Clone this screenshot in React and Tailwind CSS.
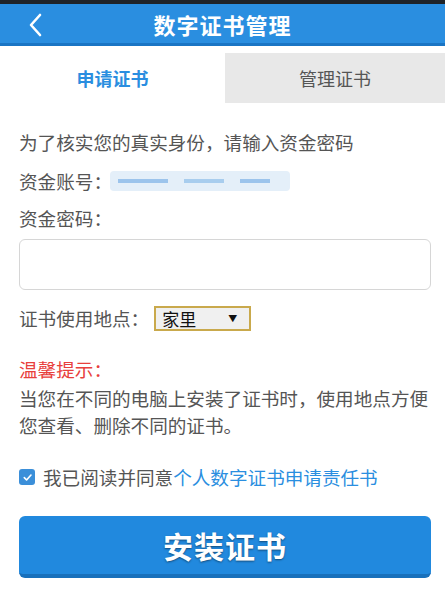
import { useState } from 'react'

const FONT = { fontFamily: '"Noto Sans CJK SC", "Noto Sans", sans-serif' }

function App() {
  const [agreed, setAgreed] = useState(true)
  const [tab, setTab] = useState(0)

  return (
    <div className="w-[445px] h-[597px] bg-white overflow-hidden text-[#555]" style={FONT}>
      {/* Header */}
      <div className="h-[4px] bg-[#1f2328]" />
      <div className="h-[42px] bg-[#2a8ee0] border-b-[3px] border-[#1a75c4] flex items-center relative">
        <svg className="absolute left-[26px] top-[8px]" width="18" height="26" viewBox="0 0 18 26">
          <path d="M14 3 L5 13 L14 23" fill="none" stroke="#fff" strokeWidth="2.6" strokeLinecap="round" strokeLinejoin="round" />
        </svg>
        <div className="flex-1 text-center text-white font-bold text-[22px] leading-none tracking-[1px]">数字证书管理</div>
      </div>

      {/* Tabs */}
      <div className="flex mt-[7px] h-[50px]">
        <button
          onClick={() => setTab(0)}
          className={`w-[225px] text-[18px] ${tab === 0 ? 'bg-white text-[#2a8ee0] font-bold' : 'bg-[#e8e8e8] text-[#555]'}`}
        >
          申请证书
        </button>
        <button
          onClick={() => setTab(1)}
          className={`flex-1 text-[18px] ${tab === 1 ? 'bg-white text-[#2a8ee0] font-bold' : 'bg-[#e8e8e8] text-[#555]'}`}
        >
          管理证书
        </button>
      </div>

      {/* Form */}
      <div className="pl-[19px] pr-[12px] pt-[27px] text-[18.6px]">
        <p className="leading-[24px]">为了核实您的真实身份，请输入资金密码</p>
        <div className="flex items-center mt-[15px] leading-[24px]">
          <span>资金账号：</span>
          <div className="ml-[-2px] h-[20px] w-[180px] bg-[#e4eff9] flex items-center gap-[16px] px-[8px] rounded-sm">
            <div className="h-[4px] w-[50px] bg-[#9cc4ec]" />
            <div className="h-[4px] w-[40px] bg-[#a8cdee]" />
            <div className="h-[4px] w-[30px] bg-[#9cc4ec]" />
          </div>
        </div>
        <p className="mt-[13px] leading-[24px]">资金密码：</p>
        <input
          type="password"
          className="mt-[9px] w-[412px] h-[51px] border border-[#d6d6d6] rounded-[6px] outline-none px-3"
        />
        <div className="flex items-center mt-[14px] h-[28px]">
          <span>证书使用地点：</span>
          <div className="ml-[5px] w-[97px] h-[25px] border-2 border-[#c9a94c] bg-[#f0f0f0] flex items-center justify-between pl-[6px] pr-[12px] text-[#111]">
            <span className="text-[17px] leading-none">家里</span>
            <span className="text-[9px] leading-none">▼</span>
          </div>
        </div>

        <p className="mt-[25px] text-[#e8403c] leading-[24px]">温馨提示：</p>
        <p className="mt-[3px] leading-[27px]">当您在不同的电脑上安装了证书时，使用地点方便您查看、删除不同的证书。</p>

        <label className="flex items-center mt-[27px] leading-[24px] cursor-pointer">
          <span
            onClick={() => setAgreed(!agreed)}
            className={`w-[16px] h-[16px] rounded-[3px] flex items-center justify-center mr-[8px] ${agreed ? 'bg-[#3b8fd9]' : 'border border-[#999]'}`}
          >
            {agreed && (
              <svg width="11" height="11" viewBox="0 0 12 12">
                <path d="M2.5 6.2 L5 8.7 L9.8 3.3" fill="none" stroke="#fff" strokeWidth="1.8" strokeLinecap="round" strokeLinejoin="round" />
              </svg>
            )}
          </span>
          <span>我已阅读并同意</span>
          <span className="text-[#2a8ee0]">个人数字证书申请责任书</span>
        </label>

        <button className="mt-[27px] w-[412px] h-[62px] rounded-[6px] bg-[#2189de] border-b-[4px] border-[#1870bb] text-white font-bold text-[30px] tracking-[1px] [text-shadow:0_1px_2px_rgba(0,0,0,0.45)]">
          安装证书
        </button>
      </div>
    </div>
  )
}

export default App
